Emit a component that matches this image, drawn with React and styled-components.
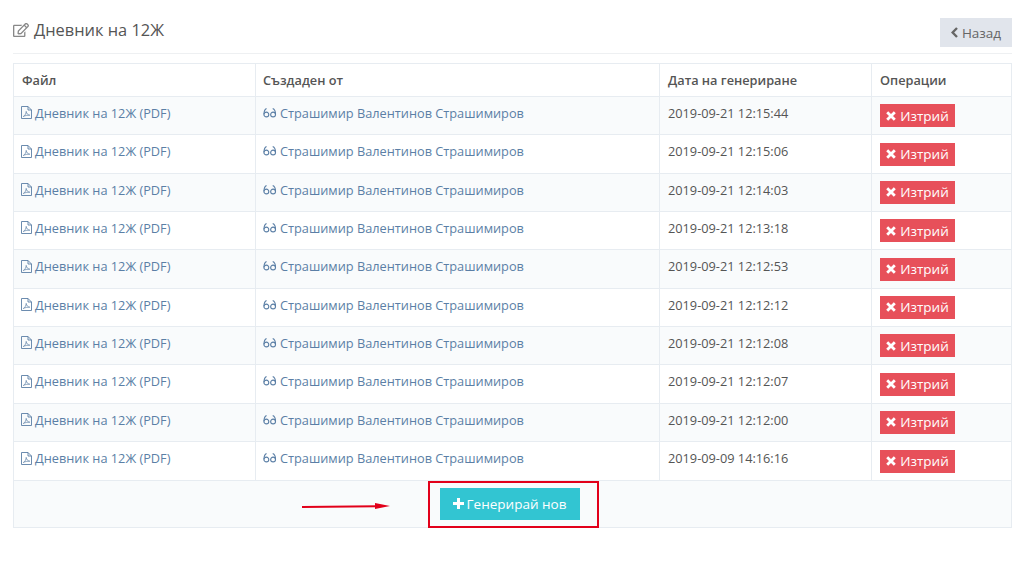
import React from 'react';
import styled, { createGlobalStyle } from 'styled-components';
import { FaRegEdit } from 'react-icons/fa';

const GlobalStyle = createGlobalStyle`
  html, body {
    margin: 0;
    padding: 0;
    background: #fff;
    font-family: "Open Sans", "Liberation Sans", sans-serif;
    font-size: 12.75px;
    color: #555;
  }
`;

const Page = styled.div`
  width: 1024px;
  height: 574px;
  padding: 18px 12px 0 13px;
  box-sizing: border-box;
  overflow: hidden;
`;

const Header = styled.div`
  display: flex;
  justify-content: space-between;
  align-items: flex-end;
  height: 35px;
  border-bottom: 1px solid #eef0f2;
  margin-bottom: 9px;
`;

const Title = styled.h3`
  margin: 0 0 12px;
  font-size: 16.4px;
  font-weight: 400;
  line-height: 22px;
  color: #555;
  display: flex;
  align-items: center;
  gap: 5px;
  svg {
    color: #888;
    font-size: 16px;
  }
`;

const BackButton = styled.button`
  width: 72px;
  height: 29px;
  margin-bottom: 6px;
  border: 0;
  background: #e1e5ec;
  color: #666;
  font: 400 13.5px "Open Sans", sans-serif;
  display: flex;
  align-items: center;
  justify-content: center;
  gap: 4px;
  padding: 0;
`;

const Table = styled.div`
  border: 1px solid #e7ecf1;
  width: 999px;
  box-sizing: border-box;
`;

const Row = styled.div`
  display: grid;
  grid-template-columns: 242px 404px 212px 1fr;
  height: ${(p) => p.$height}px;
  background: ${(p) => (p.$striped ? '#f9fbfc' : '#fff')};
  border-bottom: ${(p) => (p.$last ? 0 : '1px solid #e7ecf1')};
  box-sizing: border-box;
`;

const Cell = styled.div`
  display: flex;
  align-items: center;
  padding: 0 7px 5.6px 8px;
  border-right: 1px solid #e7ecf1;
  white-space: nowrap;
  &:nth-child(2) {
    padding-left: 7px;
  }
  &:last-child {
    border-right: 0;
    padding-bottom: 0;
  }
`;

const HeadCell = styled(Cell)`
  font-weight: 600;
  color: #555;
  padding-bottom: 0;
`;

const FileLink = styled.a`
  color: #5b7fa6;
  display: inline-flex;
  align-items: center;
  gap: 3px;
`;

const DeleteButton = styled.button`
  height: 23px;
  width: 75px;
  border: 0;
  padding: 0;
  background: #e7505a;
  color: #fff;
  font: 400 13.5px "Open Sans", sans-serif;
  display: flex;
  align-items: center;
  justify-content: center;
  gap: 4px;
`;

const Footer = styled.div`
  position: relative;
  height: 47px;
  display: flex;
  align-items: center;
  justify-content: center;
  background: #f9fbfc;
  border-top: 1px solid #e7ecf1;
  box-sizing: border-box;
  padding: 0 6px 1px 0;
`;

const GenerateButton = styled.button`
  width: 140px;
  height: 32px;
  border: 0;
  padding: 0;
  background: #32c5d2;
  color: #fff;
  font: 400 13.5px "Open Sans", sans-serif;
  display: flex;
  align-items: center;
  justify-content: center;
  gap: 3px;
`;

const Highlight = styled.div`
  position: absolute;
  left: 414px;
  top: 0;
  width: 171px;
  height: 47px;
  box-sizing: border-box;
  border: 2.5px solid #e2001a;
`;

const Arrow = styled.svg`
  position: absolute;
  left: 288px;
  top: 20px;
`;

const PdfSvg = styled.svg`
  margin-left: -1px;
`;

const GlassesIcon = () => (
  <svg width="14" height="12" viewBox="0 0 15 12" fill="none" stroke="currentColor" strokeWidth="1.2">
    <circle cx="3.6" cy="7.6" r="2.6" />
    <circle cx="10.8" cy="7.6" r="2.6" />
    <path d="M1 7.4 C1.1 4.5 1.7 2 3.8 1.2 M13.4 7.4 C13.4 4.5 12.6 2 10.4 1.2" />
  </svg>
);

const PdfIcon = () => (
  <PdfSvg width="11" height="13" viewBox="0 0 11 13" fill="none" stroke="currentColor" strokeWidth="0.9">
    <path d="M0.5 0.5 H7 L10.5 4 V12.5 H0.5 Z M7 0.5 V4 H10.5" />
    <path d="M2.3 10.5 C4 9.5 5.2 7.5 5.2 5.4 C5.4 7.5 6.8 9 8.8 9.2 C6.5 9 4 9.6 2.3 10.5 Z" strokeWidth="0.7" />
  </PdfSvg>
);

const CrossIcon = () => (
  <svg width="10" height="10" viewBox="0 0 10 10" stroke="currentColor" strokeWidth="2.8">
    <path d="M1.2 1.2 L8.8 8.8 M8.8 1.2 L1.2 8.8" />
  </svg>
);

const PlusIcon = () => (
  <svg width="11" height="11" viewBox="0 0 11 11" stroke="currentColor" strokeWidth="3">
    <path d="M5.5 0 V11 M0 5.5 H11" />
  </svg>
);

const BackIcon = () => (
  <svg width="7" height="11" viewBox="0 0 7 11" fill="none" stroke="currentColor" strokeWidth="2.4">
    <path d="M6 1 L1.6 5.5 L6 10" />
  </svg>
);

const rows = [
  '2019-09-21 12:15:44',
  '2019-09-21 12:15:06',
  '2019-09-21 12:14:03',
  '2019-09-21 12:13:18',
  '2019-09-21 12:12:53',
  '2019-09-21 12:12:12',
  '2019-09-21 12:12:08',
  '2019-09-21 12:12:07',
  '2019-09-21 12:12:00',
  '2019-09-09 14:16:16',
];

const App = () => (
  <Page>
    <GlobalStyle />
    <Header>
      <Title>
        <FaRegEdit />
        Дневник на 12Ж
      </Title>
      <BackButton>
        <BackIcon />
        Назад
      </BackButton>
    </Header>
    <Table>
      <Row $height={33}>
        <HeadCell>Файл</HeadCell>
        <HeadCell>Създаден от</HeadCell>
        <HeadCell>Дата на генериране</HeadCell>
        <HeadCell>Операции</HeadCell>
      </Row>
      {rows.map((date, i) => (
        <Row key={i} $height={38.35} $striped={i % 2 === 0} $last={i === rows.length - 1}>
          <Cell>
            <FileLink>
              <PdfIcon />
              Дневник на 12Ж (PDF)
            </FileLink>
          </Cell>
          <Cell>
            <FileLink>
              <GlassesIcon />
              Страшимир Валентинов Страшимиров
            </FileLink>
          </Cell>
          <Cell>{date}</Cell>
          <Cell>
            <DeleteButton>
              <CrossIcon />
              Изтрий
            </DeleteButton>
          </Cell>
        </Row>
      ))}
      <Footer>
        <Arrow width="90" height="10" viewBox="0 0 90 10">
          <path d="M0 6 L75 5.3" stroke="#e2001a" strokeWidth="2" />
          <path d="M88 5 L73 2 L73 8 Z" fill="#e2001a" />
        </Arrow>
        <GenerateButton>
          <PlusIcon />
          Генерирай нов
        </GenerateButton>
        <Highlight />
      </Footer>
    </Table>
  </Page>
);

export default App;
